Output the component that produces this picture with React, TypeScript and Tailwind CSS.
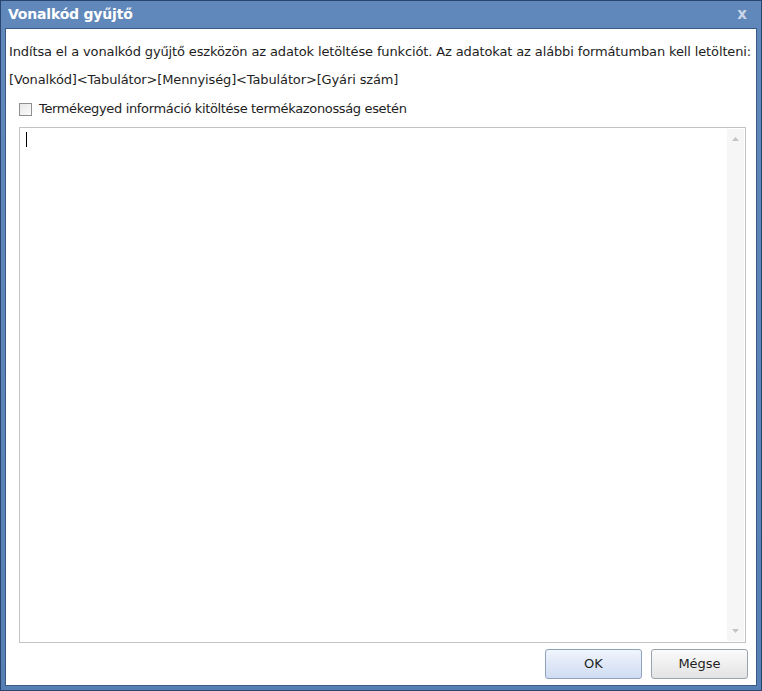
import React from 'react'

export default function App() {
  return (
    <div className="w-[762px] h-[691px] bg-white">
      {/* Window frame */}
      <div
        className="w-[762px] h-[691px] flex flex-col border border-[#2a4670] bg-gradient-to-b from-[#6188bb] to-[#5680b4]"
        style={{ fontFamily: 'Tahoma, "DejaVu Sans", "Liberation Sans", sans-serif' }}
      >
        {/* Title bar */}
        <div className="h-[27px] flex items-center justify-between pl-[7px] pr-[14px]">
          <span className="text-white font-bold text-[14px] tracking-[-0.2px]">Vonalkód gyűjtő</span>
          <span className="text-[#c9d5e6] font-bold text-[15px]">x</span>
        </div>

        {/* Body */}
        <div className="flex-1 mx-[4px] mb-[4px] border border-[#3a5a86] bg-white flex flex-col">
          <div className="flex-1 flex flex-col pl-[3px] pr-[8px] pt-[14px] pb-[4px] text-[13px] text-[#1e1e1e] tracking-[-0.13px]">
            <div className="h-[18px] leading-[18px] whitespace-nowrap">
              Indítsa el a vonalkód gyűjtő eszközön az adatok letöltése funkciót. Az adatokat az alábbi formátumban kell letölteni:
            </div>
            <div className="h-[18px] leading-[18px] mt-[10px]">
              [Vonalkód]&lt;Tabulátor&gt;[Mennyiség]&lt;Tabulátor&gt;[Gyári szám]
            </div>
            <label className="flex items-center gap-[7px] mt-[11px] pl-[10px] h-[18px]">
              <span className="w-[13px] h-[13px] border border-[#8f8f8f] bg-gradient-to-br from-[#e8e8e8] to-[#fbfbfb]" />
              <span className="leading-[18px] tracking-[-0.35px]">Termékegyed információ kitöltése termékazonosság esetén</span>
            </label>

            {/* Text area */}
            <div className="mt-[9px] ml-[10px] mr-[2px] h-[516px] border border-[#c3c3c3] flex">
              <div className="flex-1 pt-[4px] pl-[6px]">
                <div className="w-[1px] h-[15px] bg-black" />
              </div>
              <div className="w-[17px] my-[1px] mr-[1px] bg-[#f6f6f6] flex flex-col items-center justify-between py-[8px]">
                <svg width="7" height="4" viewBox="0 0 7 4">
                  <path d="M0 4 L3.5 0 L7 4 Z" fill="#c4c4c4" />
                </svg>
                <svg width="7" height="4" viewBox="0 0 7 4">
                  <path d="M0 0 L3.5 4 L7 0 Z" fill="#c4c4c4" />
                </svg>
              </div>
            </div>

            {/* Buttons */}
            <div className="flex justify-end gap-[9px] mt-[6px]">
              <button className="w-[97px] h-[30px] rounded-[3px] border border-[#8ea2bd] bg-gradient-to-b from-[#f1f5fc] to-[#cfdcf3] text-[13px] text-[#1e1e1e] tracking-normal">
                OK
              </button>
              <button className="w-[97px] h-[30px] rounded-[3px] border border-[#9aa3ad] bg-gradient-to-b from-[#fbfbfb] to-[#e3e3e3] text-[13px] text-[#1e1e1e] tracking-normal">
                Mégse
              </button>
            </div>
          </div>
        </div>
      </div>
    </div>
  )
}
